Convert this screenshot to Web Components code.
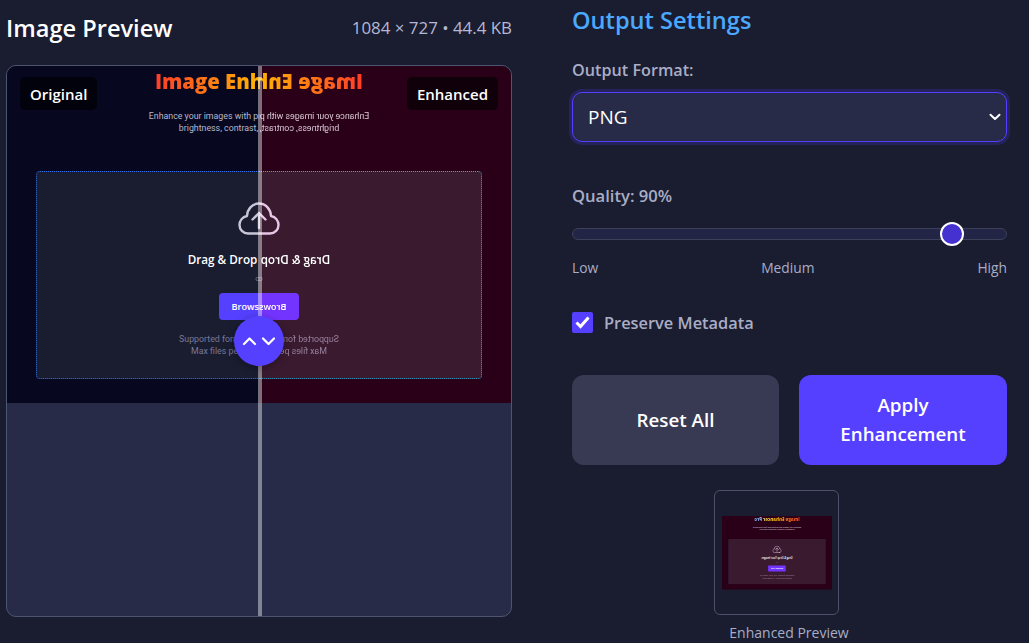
<!DOCTYPE html>
<html lang="en">
<head>
<meta charset="utf-8">
<title>Image Enhancer</title>
<style>
    html, body { margin: 0; height: 100%; overflow: hidden; background: #1a1c30; }
    body { font-family: "Open Sans", "Noto Sans", sans-serif; color: #fff; }
    .page {
        display: grid;
        grid-template-columns: 506px 435px;
        column-gap: 60px;
        padding: 0 22px 0 6px;
    }
    .settings { display: flex; flex-direction: column; }
</style>
</head>
<body>
<div class="page">
    <preview-panel heading="Image Preview" meta="1084 × 727 • 44.4 KB">
        <img-compare></img-compare>
    </preview-panel>
    <div class="settings">
        <settings-title>Output Settings</settings-title>
        <format-select label="Output Format:" value="PNG"></format-select>
        <quality-slider value="90"></quality-slider>
        <check-row>Preserve Metadata</check-row>
        <action-row>
            <action-btn>Reset All</action-btn>
            <action-btn type="primary">Apply Enhancement</action-btn>
        </action-row>
        <thumb-card caption="Enhanced Preview"></thumb-card>
    </div>
</div>

<script>
// Captura de la app dentro de la vista previa. El tono cambia los colores.
class AppShot extends HTMLElement {
    constructor() {
        super();
        this.attachShadow({ mode: 'open' });
        this.shadowRoot.innerHTML = `
            <style>
                :host {
                    display: flex;
                    flex-direction: column;
                    align-items: center;
                    width: 504px;
                    height: 337px;
                    box-sizing: border-box;
                    padding-top: 2px;
                    text-align: center;
                    font-family: Roboto, "Open Sans", sans-serif;
                    background: var(--bg);
                    --bg: #07071f;
                    --zone: #1a1c30;
                    --edge: #2a74ee;
                    --btn: #5540ff;
                    --icon: #c6c6d6;
                    --muted: #767a98;
                    --soft: #b4b8cc;
                }
                :host([tone="enhanced"]) {
                    --bg: #2a0018;
                    --zone: #3a1a2f;
                    --edge: #2cb0d8;
                    --btn: #7434ff;
                    --icon: #e6c8e6;
                    --muted: #98809c;
                    --soft: #d8c8d4;
                }
                h1 {
                    margin: 0;
                    font-family: "Open Sans", sans-serif;
                    font-size: 20.300px;
                    line-height: 26px;
                    font-weight: 800;
                    white-space: nowrap;
                    background: linear-gradient(90deg, #ff3c28 0%, #ffc000 55%, #ffd040 72%, #70b0ff 92%);
                    -webkit-background-clip: text;
                    background-clip: text;
                    color: transparent;
                }
                p { margin: 0; white-space: nowrap; }
                .sub {
                    margin-top: 16px;
                    font-size: 8.800px;
                    line-height: 12px;
                    color: var(--soft);
                }
                .zone {
                    display: flex;
                    flex-direction: column;
                    align-items: center;
                    width: 446px;
                    height: 208px;
                    box-sizing: border-box;
                    margin-top: 37px;
                    padding-top: 30px;
                    background: var(--zone);
                    border: 1px dotted var(--edge);
                    border-radius: 4px;
                }
                svg { display: block; }
                .drop {
                    margin-top: 16px;
                    font-family: "Open Sans", sans-serif;
                    font-size: 11.700px;
                    line-height: 16px;
                    font-weight: 600;
                    color: #fff;
                }
                .or {
                    margin-top: 6px;
                    font-size: 8px;
                    line-height: 11px;
                    color: var(--muted);
                }
                .browse {
                    display: flex;
                    align-items: center;
                    justify-content: center;
                    width: 81px;
                    height: 27px;
                    margin-top: 9px;
                    border-radius: 4px;
                    background: var(--btn);
                    font-family: "Open Sans", sans-serif;
                    font-size: 9.200px;
                    font-weight: 600;
                    color: #fff;
                }
                .fine {
                    margin-top: 13px;
                    font-size: 8.800px;
                    line-height: 12px;
                    color: var(--muted);
                }
            </style>
            <h1>Image Enhancer Pro</h1>
            <p class="sub">Enhance your images with professional filters and adjust<br>brightness, contrast, saturation and more</p>
            <div class="zone">
                <svg width="42" height="33" viewBox="0 0 42 33" fill="none" stroke="var(--icon)" stroke-width="2.4" stroke-linecap="round" stroke-linejoin="round">
                    <path d="M10 31.5H32C37.500 31.500 40.500 27 40.500 23C40.500 18.500 37 15 33 14.800C33 7 27.500 1.500 21 1.500C14.500 1.500 9.300 7 9 14C4.500 15 1.500 18.500 1.500 23C1.500 27.500 5 31.500 10 31.500Z"/>
                    <path d="M21 26V11M14.500 17.500L21 11L27.500 17.500"/>
                </svg>
                <p class="drop">Drag &amp; Drop Your Images</p>
                <p class="or">or</p>
                <div class="browse">Browse Files</div>
                <p class="fine">Supported formats: JPG, PNG, WEBP, GIF<br>Max files per batch: 10 (5MB each)</p>
            </div>
        `;
    }
}
customElements.define('app-shot', AppShot);

class PreviewPanel extends HTMLElement {
    constructor() {
        super();
        this.attachShadow({ mode: 'open' });
        this.shadowRoot.innerHTML = `
            <style>
                :host { display: block; }
                header {
                    display: flex;
                    align-items: center;
                    justify-content: space-between;
                    height: 55px;
                    margin-bottom: 10px;
                }
                h2 { margin: 0; font-size: 23.600px; font-weight: 600; color: #fff; }
                span { font-size: 16.900px; color: #b4b8d4; }
            </style>
            <header><h2></h2><span></span></header>
            <slot></slot>
        `;
    }

    connectedCallback() {
        this.shadowRoot.querySelector('h2').textContent = this.getAttribute('heading');
        this.shadowRoot.querySelector('span').textContent = this.getAttribute('meta');
    }
}
customElements.define('preview-panel', PreviewPanel);

// Comparador antes / despues con el divisor sobre la imagen
class ImgCompare extends HTMLElement {
    constructor() {
        super();
        this.attachShadow({ mode: 'open' });
        this.shadowRoot.innerHTML = `
            <style>
                :host {
                    display: block;
                    position: relative;
                    height: 552px;
                    box-sizing: border-box;
                    border: 1px solid #4d5570;
                    border-radius: 10px;
                    background: #272b48;
                    overflow: hidden;
                }
                .split { display: flex; height: 337px; }
                .half { width: 252px; height: 337px; overflow: hidden; flex: none; }
                .half.mirror { transform: scaleX(-1); }
                .tag {
                    position: absolute;
                    top: 11px;
                    height: 33px;
                    display: flex;
                    align-items: center;
                    padding: 0 10px;
                    border-radius: 5px;
                    background: rgba(0, 0, 0, 0.6);
                    font-size: 15px;
                    font-weight: 600;
                    color: #fff;
                }
                .tag.left { left: 13px; }
                .tag.right { right: 13px; }
                .divider {
                    position: absolute;
                    top: 0;
                    bottom: 0;
                    left: 251px;
                    width: 4px;
                    background: rgba(255, 255, 255, 0.42);
                }
                .handle {
                    position: absolute;
                    left: 227px;
                    top: 250px;
                    width: 50px;
                    height: 50px;
                    display: flex;
                    align-items: center;
                    justify-content: center;
                    border-radius: 50%;
                    background: #5540ff;
                    box-shadow: 0 2px 10px rgba(0, 0, 0, 0.3);
                }
            </style>
            <div class="split">
                <div class="half"><app-shot></app-shot></div>
                <div class="half mirror"><app-shot tone="enhanced"></app-shot></div>
            </div>
            <div class="tag left">Original</div>
            <div class="tag right">Enhanced</div>
            <div class="divider"></div>
            <div class="handle">
                <svg width="34" height="10" viewBox="0 0 34 10" fill="none" stroke="#fff" stroke-width="2.200" stroke-linecap="round" stroke-linejoin="round">
                    <path d="M2 8L7.500 2.500L13 8"/>
                    <path d="M21 2.500L26.500 8L32 2.500"/>
                </svg>
            </div>
        `;
    }
}
customElements.define('img-compare', ImgCompare);

class SettingsTitle extends HTMLElement {
    constructor() {
        super();
        this.attachShadow({ mode: 'open' });
        this.shadowRoot.innerHTML = `
            <style>
                :host {
                    display: block;
                    height: 40px;
                    font-size: 23.600px;
                    line-height: 40px;
                    font-weight: 600;
                    color: #4aa9ff;
                }
            </style>
            <slot></slot>
        `;
    }
}
customElements.define('settings-title', SettingsTitle);

class FormatSelect extends HTMLElement {
    constructor() {
        super();
        this.attachShadow({ mode: 'open' });
        this.shadowRoot.innerHTML = `
            <style>
                :host { display: block; margin-top: 18px; }
                label {
                    display: block;
                    font-size: 16.200px;
                    line-height: 24px;
                    font-weight: 600;
                    color: #a9adc6;
                }
                .box {
                    display: flex;
                    align-items: center;
                    justify-content: space-between;
                    height: 50px;
                    box-sizing: border-box;
                    margin-top: 10px;
                    padding: 0 5px 0 15px;
                    background: #272b48;
                    border: 1px solid #5540ff;
                    border-radius: 10px;
                    box-shadow: 0 0 0 3px rgba(85, 64, 255, 0.2);
                    font-size: 19px;
                    color: #fff;
                }
                svg { display: block; }
            </style>
            <label></label>
            <div class="box">
                <span></span>
                <svg width="12" height="8" viewBox="0 0 12 8" fill="none" stroke="#fff" stroke-width="2" stroke-linecap="round" stroke-linejoin="round"><path d="M1.500 1.800L6 6L10.500 1.800"/></svg>
            </div>
        `;
    }

    connectedCallback() {
        this.shadowRoot.querySelector('label').textContent = this.getAttribute('label');
        this.shadowRoot.querySelector('span').textContent = this.getAttribute('value');
    }
}
customElements.define('format-select', FormatSelect);

class QualitySlider extends HTMLElement {
    constructor() {
        super();
        this.attachShadow({ mode: 'open' });
        this.shadowRoot.innerHTML = `
            <style>
                :host { display: block; margin-top: 42px; }
                label {
                    display: block;
                    font-size: 16.600px;
                    line-height: 24px;
                    font-weight: 600;
                    color: #a9adc6;
                }
                .track {
                    position: relative;
                    height: 12px;
                    box-sizing: border-box;
                    margin-top: 20px;
                    background: #222545;
                    border: 1px solid #3d4058;
                    border-radius: 6px;
                }
                .thumb {
                    position: absolute;
                    left: 367px;
                    top: -7px;
                    width: 24px;
                    height: 24px;
                    box-sizing: border-box;
                    border: 2px solid #fff;
                    border-radius: 50%;
                    background: #4531cf;
                }
                .marks {
                    display: flex;
                    justify-content: space-between;
                    margin-top: 18px;
                    font-size: 13.800px;
                    line-height: 20px;
                    color: #a9adc6;
                }
            </style>
            <label></label>
            <div class="track"><div class="thumb"></div></div>
            <div class="marks"><span>Low</span><span>Medium</span><span>High</span></div>
        `;
    }

    connectedCallback() {
        this.shadowRoot.querySelector('label').textContent = 'Quality: ' + this.getAttribute('value') + '%';
    }
}
customElements.define('quality-slider', QualitySlider);

class CheckRow extends HTMLElement {
    constructor() {
        super();
        this.attachShadow({ mode: 'open' });
        this.shadowRoot.innerHTML = `
            <style>
                :host {
                    display: flex;
                    align-items: center;
                    gap: 11px;
                    margin-top: 32px;
                    height: 24px;
                    font-size: 16.400px;
                    font-weight: 600;
                    color: #a9adc6;
                }
                .box {
                    display: flex;
                    align-items: center;
                    justify-content: center;
                    width: 21px;
                    height: 21px;
                    border-radius: 2px;
                    background: #5540ff;
                }
            </style>
            <div class="box">
                <svg width="15" height="13" viewBox="0 0 15 13" fill="none" stroke="#fff" stroke-width="3"><path d="M1.500 6.500L5.500 10.500L13.500 1.500"/></svg>
            </div>
            <slot></slot>
        `;
    }
}
customElements.define('check-row', CheckRow);

class ActionRow extends HTMLElement {
    constructor() {
        super();
        this.attachShadow({ mode: 'open' });
        this.shadowRoot.innerHTML = `
            <style>
                :host {
                    display: grid;
                    grid-template-columns: 207px 208px;
                    column-gap: 20px;
                    margin-top: 41px;
                    height: 90px;
                }
            </style>
            <slot></slot>
        `;
    }
}
customElements.define('action-row', ActionRow);

class ActionBtn extends HTMLElement {
    constructor() {
        super();
        this.attachShadow({ mode: 'open' });
        this.shadowRoot.innerHTML = `
            <style>
                :host { display: block; }
                button {
                    width: 100%;
                    height: 100%;
                    padding: 0 36px;
                    border: none;
                    border-radius: 12px;
                    background: #383a54;
                    font-family: inherit;
                    font-size: 18.800px;
                    line-height: 29px;
                    font-weight: 600;
                    color: #fff;
                }
                :host([type="primary"]) button { background: #5540ff; }
            </style>
            <button><slot></slot></button>
        `;
    }
}
customElements.define('action-btn', ActionBtn);

// Miniatura: la misma captura reducida y reflejada
class ThumbCard extends HTMLElement {
    constructor() {
        super();
        this.attachShadow({ mode: 'open' });
        this.shadowRoot.innerHTML = `
            <style>
                :host {
                    display: block;
                    width: 150px;
                    margin: 25px 0 0 142px;
                }
                .frame {
                    display: flex;
                    align-items: center;
                    justify-content: center;
                    width: 125px;
                    height: 125px;
                    box-sizing: border-box;
                    border: 1px solid #4d5068;
                    border-radius: 6px;
                }
                .pic { width: 110px; height: 74px; overflow: hidden; }
                app-shot { transform-origin: 0 0; transform: scaleX(-0.2183) scaleY(0.2183) translateX(-504px); }
                p {
                    margin: 9px 0 0;
                    text-align: center;
                    font-size: 14px;
                    line-height: 18px;
                    color: #a9adc6;
                    white-space: nowrap;
                }
            </style>
            <div class="frame"><div class="pic"><app-shot tone="enhanced"></app-shot></div></div>
            <p></p>
        `;
    }

    connectedCallback() {
        this.shadowRoot.querySelector('p').textContent = this.getAttribute('caption');
    }
}
customElements.define('thumb-card', ThumbCard);
</script>
</body>
</html>
